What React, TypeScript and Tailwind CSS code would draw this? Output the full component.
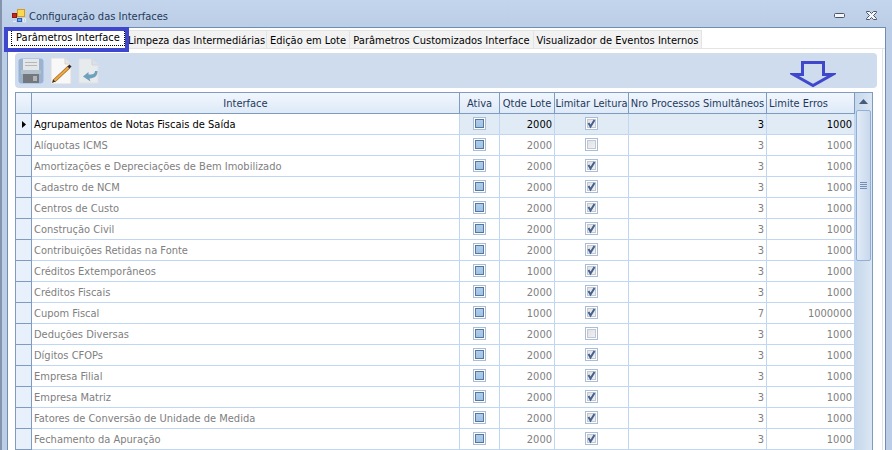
import clsx from "clsx";

const rows = [
  { name: "Agrupamentos de Notas Fiscais de Saída", lote: 2000, limitar: true, processos: 3, erros: 1000 },
  { name: "Alíquotas ICMS", lote: 2000, limitar: false, processos: 3, erros: 1000 },
  { name: "Amortizações e Depreciações de Bem Imobilizado", lote: 2000, limitar: true, processos: 3, erros: 1000 },
  { name: "Cadastro de NCM", lote: 2000, limitar: true, processos: 3, erros: 1000 },
  { name: "Centros de Custo", lote: 2000, limitar: true, processos: 3, erros: 1000 },
  { name: "Construção Civil", lote: 2000, limitar: true, processos: 3, erros: 1000 },
  { name: "Contribuições Retidas na Fonte", lote: 2000, limitar: true, processos: 3, erros: 1000 },
  { name: "Créditos Extemporâneos", lote: 1000, limitar: true, processos: 3, erros: 1000 },
  { name: "Créditos Fiscais", lote: 2000, limitar: true, processos: 3, erros: 1000 },
  { name: "Cupom Fiscal", lote: 1000, limitar: true, processos: 7, erros: 1000000 },
  { name: "Deduções Diversas", lote: 2000, limitar: false, processos: 3, erros: 1000 },
  { name: "Dígitos CFOPs", lote: 2000, limitar: true, processos: 3, erros: 1000 },
  { name: "Empresa Filial", lote: 2000, limitar: true, processos: 3, erros: 1000 },
  { name: "Empresa Matriz", lote: 2000, limitar: true, processos: 3, erros: 1000 },
  { name: "Fatores de Conversão de Unidade de Medida", lote: 2000, limitar: true, processos: 3, erros: 1000 },
  { name: "Fechamento da Apuração", lote: 2000, limitar: true, processos: 3, erros: 1000 },
];

const tabs = [
  { label: "Limpeza das Intermediárias", width: "w-[140px]" },
  { label: "Edição em Lote", width: "w-[83px]" },
  { label: "Parâmetros Customizados Interface", width: "w-[184px]" },
  { label: "Visualizador de Eventos Internos", width: "w-[168px]" },
];

const AppIcon = () => (
  <svg width="14" height="14" viewBox="0 0 14 14" aria-hidden="true">
    <rect x="5.5" y="0.5" width="7" height="7" fill="#fbd94f" stroke="#d89a1c" />
    <rect x="0.5" y="4.5" width="4" height="4" fill="#c8281c" stroke="#8c1a12" />
    <rect x="5.5" y="9.5" width="4" height="3" fill="#6fa2ee" stroke="#2a5db4" />
    <path d="M1 12.500h3M11.500 9.500h2v3.500h-2z" fill="none" stroke="#e6ecf4" />
  </svg>
);

const SaveIcon = () => (
  <svg width="26" height="26" viewBox="0 0 26 26" aria-hidden="true">
    <rect x="1" y="1" width="24" height="24" rx="2" fill="#9db3cb" stroke="#93b6df" />
    <rect x="5" y="1" width="16" height="11" fill="#e4e6e8" />
    <path d="M7 4.500h12M7 7.500h12" stroke="#b4b8bc" />
    <rect x="3" y="12" width="20" height="4" fill="#b3c0cd" />
    <rect x="5" y="16" width="16" height="9" fill="#74787c" />
    <rect x="15" y="18" width="4" height="5" fill="#b0b4b8" />
  </svg>
);

const EditIcon = () => (
  <svg width="22" height="28" viewBox="0 0 22 28" aria-hidden="true">
    <path d="M1 1h14l6 6v20H1z" fill="#f8f8f8" stroke="#dcdcdc" />
    <path d="M15 1v6h6" fill="#e6e6e6" stroke="#d4d4d4" />
    <path d="M4 24L19 10" stroke="#9a6a2c" strokeWidth="3.500" />
    <path d="M4 24L19 10" stroke="#f2a93f" strokeWidth="2" />
    <path d="M2 26l1-3.500 2.500 2z" fill="#3a2c20" />
    <path d="M18.500 10.500l2-2" stroke="#2b2b33" strokeWidth="3" />
  </svg>
);

const UndoIcon = () => (
  <svg width="21" height="26" viewBox="0 0 21 26" aria-hidden="true">
    <path d="M1 1h13l6 6v18H1z" fill="#e8ebee" stroke="#dde1e5" />
    <path d="M14 1v6h6" fill="#dde1e5" stroke="#cfd4d9" />
    <path d="M5 18.500l5.500-4.500v2.500c4 0 6.500-.500 6.500-3.500h2.500c0 5-2.500 7-8 7.500l1 3z" fill="#6fa0bd" />
  </svg>
);

const Check = ({ checked, label }: { checked: boolean; label: string }) => (
  <span className="relative mx-auto block size-[13px]">
    <input
      type="checkbox"
      defaultChecked={checked}
      aria-label={label}
      className="peer block size-full appearance-none border border-[#a9bcd8] bg-linear-to-br from-[#dcdee2] to-[#f4f5f7] shadow-[inset_0_0_0_1px_#ffffff,inset_0_0_0_2px_#c3c8d0]"
    />
    <svg viewBox="0 0 13 13" className="pointer-events-none absolute inset-0 hidden size-full peer-checked:block">
      <path d="M3.500 6l2 3.500L9.500 3" fill="none" stroke="#45618f" strokeWidth="2" />
    </svg>
  </span>
);

// "Ativa" has no value yet, so the box is drawn filled
const Mixed = ({ label }: { label: string }) => (
  <input
    type="checkbox"
    aria-label={label}
    className="mx-auto block size-[13px] appearance-none border border-[#a9bcd8] bg-linear-to-b from-[#b4d0ec] to-[#9bbfe2] shadow-[inset_0_0_0_1px_#ffffff,inset_0_0_0_2px_#56779f]"
  />
);

const head = "border-r border-b border-[#7f9cc0] bg-linear-to-b from-[#f1f6fd] to-[#deeaf8] p-0 pt-[2px] font-normal whitespace-nowrap";

const Grid = () => (
  <div className="flex border border-b-0 border-[#7f9cc0]">
    <table className="w-full min-w-0 flex-1 table-fixed border-separate border-spacing-0">
      <colgroup>
        <col className="w-4" />
        <col />
        <col className="w-10" />
        <col className="w-[55px]" />
        <col className="w-[74px]" />
        <col className="w-[138px]" />
        <col className="w-[88px]" />
      </colgroup>
      <thead className="text-[#1e395b]">
        <tr className="h-[21px]">
          <th className={head} aria-label="Linha atual" />
          <th className={head}>Interface</th>
          <th className={head}>Ativa</th>
          <th className={head}>Qtde Lote</th>
          <th className={head}>Limitar Leitura</th>
          <th className={head}>Nro Processos Simultâneos</th>
          <th className={clsx(head, "pl-[2px] text-left")}>Limite Erros</th>
        </tr>
      </thead>
      <tbody>
        {rows.map((row, i) => {
          const current = i === 0;
          const cell = clsx("border-r border-b border-[#c0d7f4] p-0", current && "bg-[#e1ebf6]");
          return (
            <tr key={row.name} className={clsx("h-[21px]", current ? "text-black" : "text-[#808080]")}>
              <td className="border-r border-b border-[#7f9cc0] bg-[#e8f1fb] p-0">
                {current && (
                  <svg width="4" height="7" viewBox="0 0 4 7" className="mx-auto">
                    <path d="M0 0l4 3.500L0 7z" />
                  </svg>
                )}
              </td>
              <td className="border-r border-b border-[#c0d7f4] p-0 pt-[2px] pl-[2px] whitespace-nowrap">{row.name}</td>
              <td className={clsx(cell, "pb-px")}>
                <Mixed label={"Ativa " + row.name} />
              </td>
              <td className={clsx(cell, "pt-[2px] pr-[2px] text-right")}>{row.lote}</td>
              <td className={clsx(cell, "pb-px")}>
                <Check checked={row.limitar} label={"Limitar leitura " + row.name} />
              </td>
              <td className={clsx(cell, "pt-[2px] pr-[2px] text-right")}>{row.processos}</td>
              <td className={clsx(cell, "pt-[2px] pr-[2px] text-right")}>{row.erros}</td>
            </tr>
          );
        })}
      </tbody>
    </table>
    <div className="flex w-[17px] flex-col items-center bg-linear-to-r from-[#c6d8ec] to-[#dae6f3]">
      <button aria-label="Rolar para cima" className="flex h-[17px] w-full items-center justify-center">
        <svg width="9" height="5" viewBox="0 0 9 5">
          <path d="M0 5L4.500 0 9 5z" fill="#46597f" />
        </svg>
      </button>
      <div className="flex h-[151px] w-[15px] flex-col items-center justify-center gap-px rounded-xs border border-[#8fb0d8] bg-linear-to-r from-[#e2ebf6] to-[#c8d8ec]">
        <span className="h-px w-[7px] bg-[#7590b8]" />
        <span className="h-px w-[7px] bg-[#7590b8]" />
        <span className="h-px w-[7px] bg-[#7590b8]" />
        <span className="h-px w-[7px] bg-[#7590b8]" />
      </div>
    </div>
  </div>
);

const App = () => {
  return (
    <div className="flex h-screen flex-col overflow-hidden border-l-2 border-[#8494ae] bg-linear-to-b from-[#c3d5ec] to-[#bccde6] to-[28px] pr-[6px] pl-[5px] font-['DejaVu_Sans_Condensed','DejaVu_Sans',sans-serif] text-[11px] leading-[14px]">
      <header className="flex h-[27px] shrink-0 items-center gap-[3px] pt-[4px] pr-[9px] pl-[5px] text-[#1e395b]">
        <AppIcon />
        <h1 className="flex-1 pt-[2px]">Configuração das Interfaces</h1>
        <button aria-label="Minimizar" className="mr-[18px]">
          <svg width="11" height="5" viewBox="0 0 11 5">
            <rect x="0.5" y="0.5" width="10" height="4" rx="1" fill="#f4f7fb" stroke="#4c5566" />
          </svg>
        </button>
        <button aria-label="Fechar">
          <svg width="11" height="9" viewBox="0 0 11 9">
            <path d="M.5.500h3l2 2 2-2h3v1l-3 3 3 3v1h-3l-2-2-2 2h-3v-1l3-3-3-3z" fill="#f4f7fb" stroke="#4c5566" />
          </svg>
        </button>
      </header>

      <main className="flex min-h-0 flex-1 flex-col border border-b-0 border-[#6f8db3] bg-white pt-[2px]">
        <div role="tablist" className="flex h-[19px] shrink-0 border-b border-[#e4e4e4]">
          <div className="relative w-[119px]">
            <button role="tab" aria-selected="true" className="ml-[3px] h-4 w-[114px] border border-dotted border-black whitespace-nowrap">
              Parâmetros Interface
            </button>
            <span className="pointer-events-none absolute -top-[3px] -left-1 h-[25px] w-[125px] border-4 border-[#3f48cc]" />
          </div>
          {tabs.map((tab) => (
            <button
              key={tab.label}
              role="tab"
              aria-selected="false"
              className={clsx("border-t border-r border-[#e4e4e4] bg-[#f2f2f2] pt-[2px] whitespace-nowrap", tab.width)}
            >
              {tab.label}
            </button>
          ))}
        </div>

        <section className="mr-[2px] flex min-h-0 flex-1 flex-col gap-1 border-r border-[#e4e4e4] pt-1 pr-[5px] pl-[7px]">
          <div className="relative flex h-[35px] shrink-0 items-center gap-[6px] rounded-sm bg-[#cfdcee] pl-[3px]">
            <button aria-label="Salvar">
              <SaveIcon />
            </button>
            <button aria-label="Editar">
              <EditIcon />
            </button>
            <button aria-label="Desfazer">
              <UndoIcon />
            </button>
            <svg width="46" height="28" viewBox="0 0 46 28" className="absolute right-[41px] bottom-0" aria-hidden="true">
              <path d="M12.500 2.500h21v12h9L23 25.500 3.500 14.500h9z" fill="none" stroke="#3f48cc" strokeWidth="3" />
            </svg>
          </div>
          <div className="mr-[4px]">
            <Grid />
          </div>
        </section>
      </main>
    </div>
  );
};

export default App;
